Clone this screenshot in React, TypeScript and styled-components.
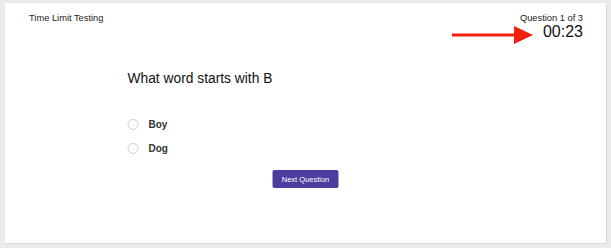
import React, { useState } from 'react';
import styled, { createGlobalStyle } from 'styled-components';

const GlobalStyle = createGlobalStyle`
  html, body {
    margin: 0;
    padding: 0;
    background: #ebebeb;
  }
  body {
    font-family: 'Liberation Sans', Arial, sans-serif;
    color: #1e1e1e;
  }
`;

const Page = styled.div`
  padding: 3px 5px 5px 5px;
`;

const Card = styled.div`
  position: relative;
  height: 240px;
  background: #ffffff;
  box-shadow: 1px 1px 0 #d8d8d8;
  box-sizing: border-box;
  padding: 10px 23px 0 24px;
`;

const Header = styled.div`
  display: flex;
  justify-content: space-between;
  align-items: flex-start;
`;

const QuizTitle = styled.div`
  font-size: 9.3px;
  color: #222;
`;

const Status = styled.div`
  display: flex;
  flex-direction: column;
  align-items: flex-end;
`;

const Counter = styled.div`
  font-size: 9.3px;
  color: #222;
`;

const Timer = styled.div`
  font-size: 16px;
  color: #111;
`;

const Arrow = styled.svg`
  position: absolute;
  left: 447px;
  top: 22px;
`;

const Body = styled.div`
  width: 356px;
  margin: 30px auto 0 auto;
  transform: translateX(-0.5px);
`;

const Question = styled.h2`
  margin: 0;
  font-size: 13.8px;
  font-weight: 400;
  color: #111;
`;

const Options = styled.div`
  display: flex;
  flex-direction: column;
  gap: 10px;
  margin-top: 31px;
`;

const Option = styled.label`
  display: flex;
  align-items: center;
  height: 14px;
  gap: 10px;
  cursor: pointer;
`;

const Radio = styled.span<{ checked: boolean }>`
  width: 11px;
  height: 11px;
  border-radius: 50%;
  box-sizing: border-box;
  border: 1px solid #cfcfcf;
  background: ${({ checked }) => (checked ? '#4b3c9e' : '#fff')};
`;

const OptionText = styled.span`
  font-size: 10px;
  font-weight: 700;
  color: #333;
`;

const Actions = styled.div`
  display: flex;
  justify-content: center;
  margin-top: 15px;
`;

const NextButton = styled.button`
  width: 66px;
  height: 18px;
  padding: 0;
  border: none;
  border-radius: 2px;
  background: #4b3c9e;
  color: #fff;
  font-family: 'Liberation Sans', Arial, sans-serif;
  font-size: 7.5px;
  cursor: pointer;
`;

const answers = ['Boy', 'Dog'];

const App = () => {
  const [picked, setPicked] = useState<string | null>(null);

  return (
    <>
      <GlobalStyle />
      <Page>
        <Card>
          <Header>
            <QuizTitle>Time Limit Testing</QuizTitle>
            <Status>
              <Counter>Question 1 of 3</Counter>
              <Timer>00:23</Timer>
            </Status>
          </Header>
          <Arrow width='82' height='20' viewBox='0 0 82 20'>
            <rect x='0' y='8.5' width='63' height='3' fill='#f2200f' />
            <polygon points='62,1 81,10 62,19' fill='#f2200f' />
          </Arrow>
          <Body>
            <Question>What word starts with B</Question>
            <Options>
              {answers.map((a) => (
                <Option key={a} onClick={() => setPicked(a)}>
                  <Radio checked={picked === a} />
                  <OptionText>{a}</OptionText>
                </Option>
              ))}
            </Options>
            <Actions>
              <NextButton>Next Question</NextButton>
            </Actions>
          </Body>
        </Card>
      </Page>
    </>
  );
};

export default App;
